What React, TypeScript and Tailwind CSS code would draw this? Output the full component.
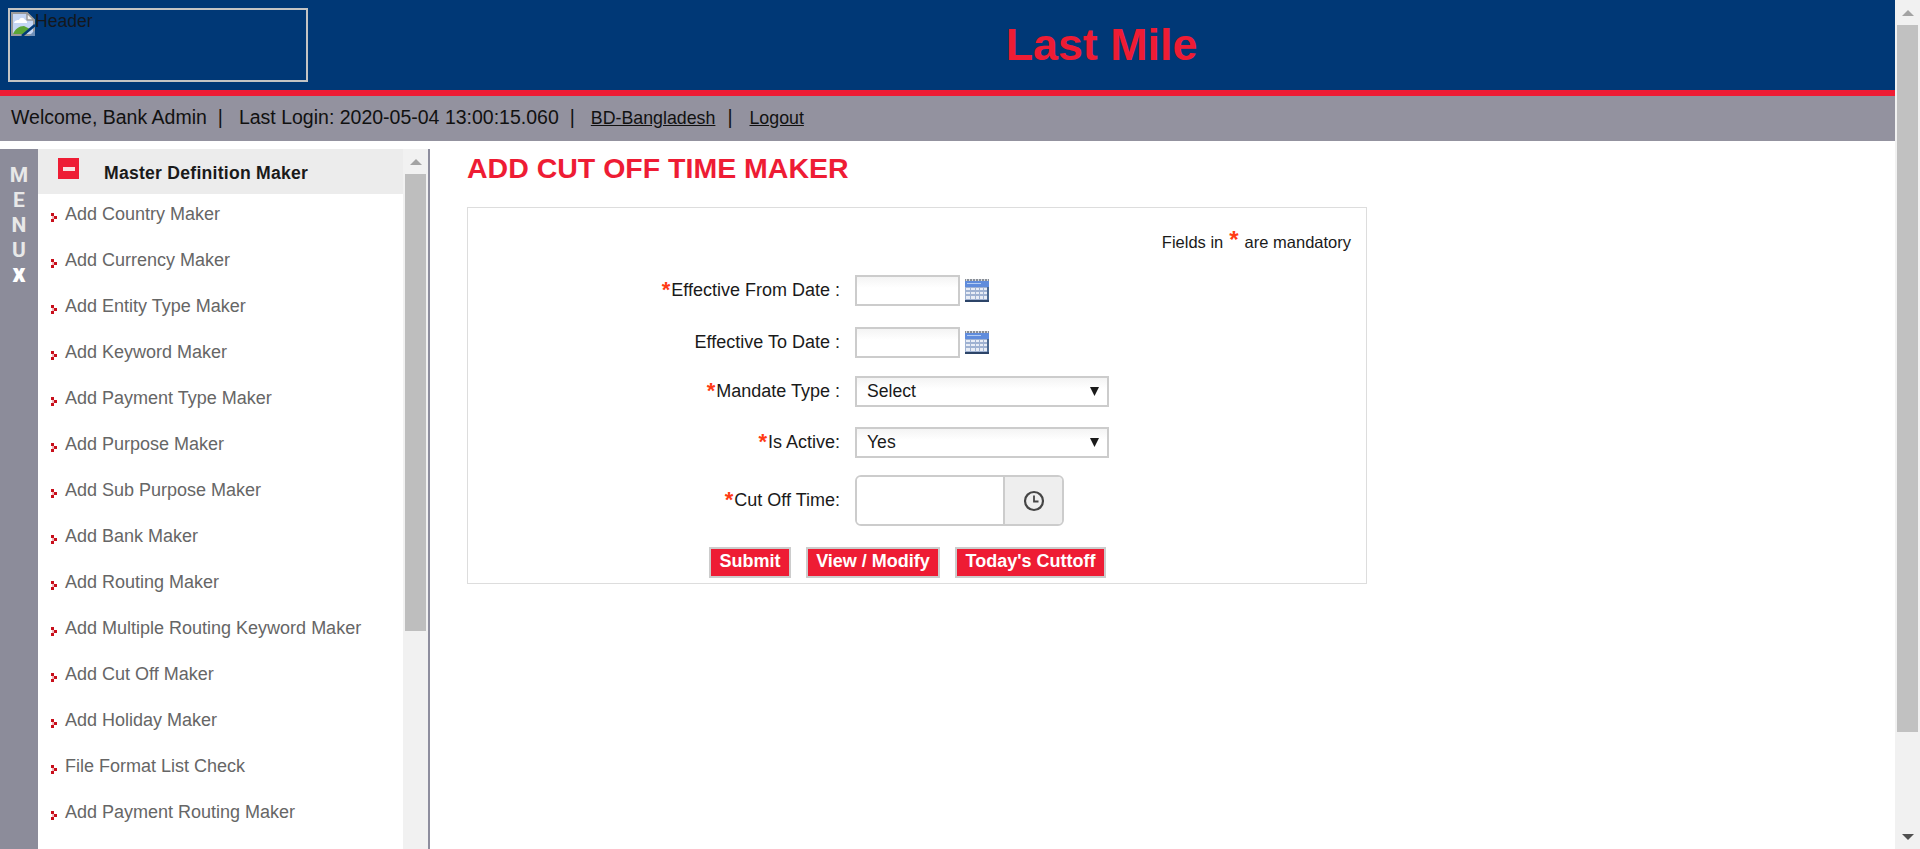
const menuItems = [
  "Add Country Maker",
  "Add Currency Maker",
  "Add Entity Type Maker",
  "Add Keyword Maker",
  "Add Payment Type Maker",
  "Add Purpose Maker",
  "Add Sub Purpose Maker",
  "Add Bank Maker",
  "Add Routing Maker",
  "Add Multiple Routing Keyword Maker",
  "Add Cut Off Maker",
  "Add Holiday Maker",
  "File Format List Check",
  "Add Payment Routing Maker",
];

function BrokenImage() {
  return (
    <svg width="24" height="24" viewBox="0 0 24 24" className="shrink-0">
      <path d="M1 1H16L23 8V23H1Z" fill="#c4d6f4" stroke="#9a9a9a" strokeWidth="2" />
      <path d="M16 1V8H23Z" fill="#f2f2f2" stroke="#9a9a9a" strokeWidth="1.5" />
      <path d="M3 11c1-3 3-3 5-3 1-3 5-3 6 0 2 0 2 2 2 3Z" fill="#ffffff" />
      <path d="M2 22c2-5 6-8 11-8l6 3-4 5Z" fill="#5aa536" />
      <path d="M11 24L24 13" stroke="#003876" strokeWidth="2.5" />
      <path d="M18 24L24 18V24Z" fill="#6f8fb8" />
    </svg>
  );
}

function Bullet() {
  return (
    <svg width="6" height="9" viewBox="0 0 6 9" className="shrink-0" shapeRendering="crispEdges">
      <path d="M0 0h3v3H0zM3 3h3v3H3zM0 6h3v3H0z" fill="#c8101c" />
      <path d="M1 3h2v3H1z" fill="#f3b8bc" />
    </svg>
  );
}

function CalendarIcon() {
  return (
    <svg width="24" height="23" viewBox="0 0 24 23" shapeRendering="crispEdges" className="shrink-0">
      <rect x="0" y="0" width="24" height="23" fill="#3d5f8f" />
      <rect x="0" y="0" width="24" height="2" fill="#8a8f96" />
      <path d="M1 0h1v2H1zM4 0h1v2H4zM7 0h1v2H7zM10 0h1v2h-1zM13 0h1v2h-1zM16 0h1v2h-1zM19 0h1v2h-1zM22 0h1v2h-1z" fill="#d8dde4" />
      <rect x="0" y="2" width="24" height="6" fill="#5f8cdc" />
      <rect x="2" y="4" width="14" height="1" fill="#b4cdf4" />
      <rect x="0" y="8" width="24" height="13" fill="#9fb2d2" />
      <path d="M1 9h4v2H1zM6 9h4v2H6zM11 9h3v2h-3zM15 9h3v2h-3zM19 9h3v2h-3zM1 13h4v2H1zM6 13h4v2H6zM11 13h3v2h-3zM15 13h3v2h-3zM19 13h3v2h-3zM1 17h4v3H1zM6 17h4v3H6zM11 17h3v3h-3zM15 17h3v3h-3zM19 17h3v3h-3z" fill="#e8edf6" />
      <rect x="0" y="21" width="24" height="2" fill="#2c4468" />
      <rect x="22" y="8" width="2" height="13" fill="#4a6890" />
    </svg>
  );
}

function ClockIcon() {
  return (
    <svg width="22" height="22" viewBox="0 0 22 22" fill="none" stroke="#454545" strokeWidth="2.2">
      <circle cx="11" cy="11" r="9" />
      <path d="M11 5.5V11.5H15.5" strokeWidth="1.8" />
    </svg>
  );
}

function ScrollArrow({ down }: { down?: boolean }) {
  return (
    <svg width="12" height="6" viewBox="0 0 12 6" className={down ? "rotate-180" : ""}>
      <path d="M6 0L12 6H0Z" fill={down ? "#505050" : "#a3a3a3"} />
    </svg>
  );
}

function Star() {
  return <span className="text-[#ff3b14] text-[22px] font-bold leading-none relative top-[-1px] mr-px">*</span>;
}

function FormLabel({ text, required }: { text: string; required?: boolean }) {
  return (
    <label className="w-[372px] flex items-center justify-end text-[18px] text-[#1a1a1a] whitespace-pre">
      {required && <Star />}
      {text}
    </label>
  );
}

function DateInput() {
  return (
    <div className="flex items-center gap-[5px]">
      <input className="w-[105px] h-[31px] border-2 border-[#cccccc] bg-linear-to-b from-[#f4f4f4] to-white to-40% outline-none" />
      <CalendarIcon />
    </div>
  );
}

function SelectBox({ value }: { value: string }) {
  return (
    <div className="relative w-[254px] h-[31px]">
      <select className="appearance-none w-full h-full border-2 border-[#cccccc] bg-linear-to-b from-[#f4f4f4] to-white to-40% pl-[10px] pb-[3px] text-[17.6px] text-[#1a1a1a] outline-none">
        <option>{value}</option>
      </select>
      <svg width="9" height="9" viewBox="0 0 9 9" className="absolute right-[10px] top-[11px]">
        <path d="M0 0H9L4.5 9Z" fill="#1a1a1a" />
      </svg>
    </div>
  );
}

function RedButton({ label, width }: { label: string; width: string }) {
  return (
    <button className={`${width} h-[31px] border-2 border-[#cccccc] bg-[#ee1c34] text-white font-bold text-[18px] leading-none pb-[3px]`}>
      {label}
    </button>
  );
}

export default function App() {
  return (
    <div className="flex h-screen overflow-hidden bg-white font-['Liberation_Sans',Arial,sans-serif]">
      <div className="flex-1 min-w-0 flex flex-col">
        <header className="h-[90px] bg-[#003876] flex pl-2 pt-2">
          <div className="w-[300px] h-[74px] border-2 border-[#c4c4c4] flex items-start pl-px pt-[2px] text-[17.6px] leading-[18px] text-[#14171c]">
            <BrokenImage />
            <span>Header</span>
          </div>
          <div className="flex-1 flex justify-center pt-[6px]">
            <h1 className="text-[44.8px] leading-[60px] font-bold text-[#ee1c34]">Last Mile</h1>
          </div>
        </header>
        <div className="h-[6px] bg-[#ee1c34]" />
        <nav className="h-[45px] bg-[#93929f] flex items-center pl-[11px] pb-[1px] text-[19.5px] text-[#111111] whitespace-pre">
          <span>Welcome, Bank Admin</span>
          <span className="ml-[11px]">|</span>
          <span className="ml-[16px]">Last Login: 2020-05-04 13:00:15.060</span>
          <span className="ml-[11px]">|</span>
          <a href="#" className="ml-[16px] underline text-[17.8px]">BD-Bangladesh</a>
          <span className="ml-[12px]">|</span>
          <a href="#" className="ml-[17px] underline text-[17.8px]">Logout</a>
        </nav>

        <div className="flex-1 min-h-0 flex pt-2">
          <aside className="w-[430px] shrink-0 flex border-r-2 border-[#8e8e9e]">
            <div className="w-[38px] shrink-0 bg-[#8c8c9a] flex flex-col items-center pt-[14px] font-['Roboto',sans-serif] font-bold text-[21px] leading-[25px] text-[#e8e8e8]">
              <span className="block">M</span>
              <span className="block">E</span>
              <span className="block">N</span>
              <span className="block">U</span>
              <span className="block font-black text-[25px] leading-[22px] text-white">x</span>
            </div>
            <div className="flex-1 min-w-0 bg-white overflow-hidden">
              <div className="h-[45px] bg-[#ececec] flex pl-[20px] pt-[9px]">
                <span className="w-[21px] h-[21px] bg-[#ee1c34] flex items-center justify-center shrink-0">
                  <span className="w-[12px] h-[4px] bg-[#f8e0e0]" />
                </span>
                <span className="ml-[25px] mt-[5px] text-[17.6px] leading-[20px] tracking-[0.25px] font-bold text-[#1a1a1a]">Master Definition Maker</span>
              </div>
              <ul>
                {menuItems.map((item) => (
                  <li key={item} className="h-[46px] flex items-center pl-[13px] text-[18px] text-[#666666]">
                    <span className="mt-px"><Bullet /></span>
                    <a href="#" className="ml-2 -mt-[6px]">{item}</a>
                  </li>
                ))}
              </ul>
            </div>
            <div className="w-[25px] shrink-0 bg-[#f1f1f1] flex flex-col items-center">
              <div className="h-[25px] shrink-0 flex items-center justify-center"><ScrollArrow /></div>
              <div className="w-[21px] h-[457px] bg-[#bebebe]" />
            </div>
          </aside>

          <main className="flex-1 min-w-0 pl-[37px]">
            <h2 className="text-[28.5px] leading-[34px] font-bold text-[#ee1c34] mt-[2px]">ADD CUT OFF TIME MAKER</h2>
            <section className="mt-[22px] w-[900px] h-[377px] border border-[#dddddd]">
              <p className="mt-[24px] pr-[15px] flex justify-end items-center h-[20px] text-[16.5px] text-[#1a1a1a] whitespace-pre">
                Fields in
                <span className="text-[#ff3b14] text-[24px] font-bold leading-none mx-[6px] relative top-[-2px]">*</span>
                are mandatory
              </p>
              <div className="mt-[23px] flex items-center gap-[15px]">
                <FormLabel text="Effective From Date :" required />
                <DateInput />
              </div>
              <div className="mt-[21px] flex items-center gap-[15px]">
                <FormLabel text="Effective To Date :" />
                <DateInput />
              </div>
              <div className="mt-[18px] flex items-center gap-[15px]">
                <FormLabel text="Mandate Type :" required />
                <SelectBox value="Select" />
              </div>
              <div className="mt-[20px] flex items-center gap-[15px]">
                <FormLabel text="Is Active:" required />
                <SelectBox value="Yes" />
              </div>
              <div className="mt-[17px] flex items-center gap-[15px]">
                <FormLabel text="Cut Off Time:" required />
                <div className="w-[209px] h-[51px] flex border-2 border-[#cccccc] rounded-[6px] overflow-hidden">
                  <input className="w-[146px] bg-white outline-none" />
                  <div className="flex-1 border-l-2 border-[#cccccc] bg-[#eeeeee] flex items-center justify-center">
                    <ClockIcon />
                  </div>
                </div>
              </div>
              <div className="mt-[21px] ml-[241px] flex gap-[15px]">
                <RedButton label="Submit" width="w-[82px]" />
                <RedButton label="View / Modify" width="w-[134px]" />
                <RedButton label="Today's Cuttoff" width="w-[151px]" />
              </div>
            </section>
          </main>
        </div>
      </div>

      <div className="w-[25px] shrink-0 bg-[#f1f1f1] flex flex-col items-center">
        <div className="h-[25px] shrink-0 flex items-center justify-center"><ScrollArrow /></div>
        <div className="w-[21px] h-[707px] bg-[#c1c1c1]" />
        <div className="mt-auto h-[25px] shrink-0 flex items-center justify-center"><ScrollArrow down /></div>
      </div>
    </div>
  );
}
